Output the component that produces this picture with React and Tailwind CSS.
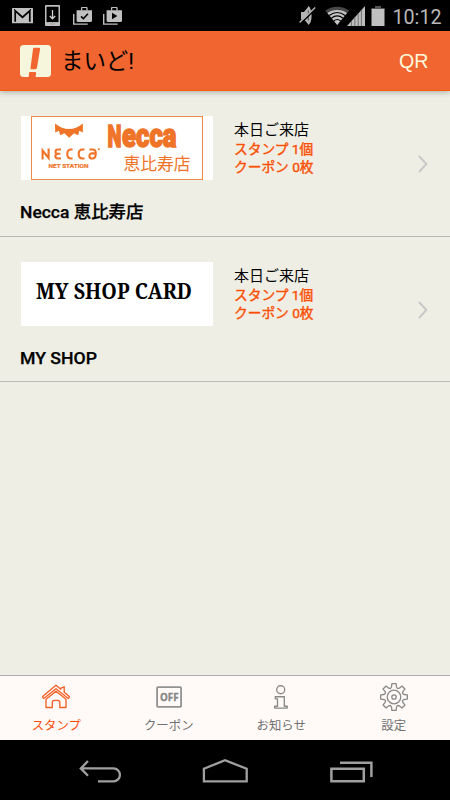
import React from "react";

const jp = "font-['Roboto','Noto_Sans_CJK_JP',sans-serif]";

function GmailIcon() {
  return (
    <svg width="21" height="16" viewBox="0 0 21 16" className="ml-3 block">
      <rect width="21" height="15.3" rx="0.6" fill="#c0c0c0" />
      <path d="M3.2 13.8V2.8L10.5 9.4L17.8 2.8V13.8" fill="none" stroke="#000" strokeWidth="1.7" />
      <path d="M2 1.2L10.5 8.8L19 1.2" fill="none" stroke="#000" strokeWidth="0.9" />
    </svg>
  );
}

function DeviceDownloadIcon() {
  return (
    <svg width="15" height="21" viewBox="0 0 15 21" className="ml-3 block">
      <rect width="15" height="21" rx="0.8" fill="#c0c0c0" />
      <rect x="1.5" y="1.7" width="12" height="15.4" fill="#000" />
      <path d="M7.5 5V13M4.8 11L7.5 13.8L10.2 11" fill="none" stroke="#d0d0d0" strokeWidth="1.3" />
      <path d="M5.3 19h4.4" stroke="#888" strokeWidth="0.6" />
    </svg>
  );
}

function BagIcon({ children, className }) {
  return (
    <svg width="19" height="18" viewBox="0 0 19 18" className={className}>
      <path d="M0.7 7V17.1H14.7" fill="none" stroke="#c0c0c0" strokeWidth="1.4" />
      <path d="M8.6 3.4V1.2a0.8 0.8 0 0 1 .8-.8h3.8a0.8 0.8 0 0 1 .8.8V3.4" fill="none" stroke="#c0c0c0" strokeWidth="1.3" />
      <path d="M3.6 3.2H19V13.4a1.6 1.6 0 0 1-1.6 1.6H5.2a1.6 1.6 0 0 1-1.6-1.6Z" fill="#c0c0c0" />
      {children}
    </svg>
  );
}

function StatusBar() {
  return (
    <div className="flex h-[31px] items-center bg-black">
      <GmailIcon />
      <DeviceDownloadIcon />
      <BagIcon className="ml-[13px] block">
        <path d="M8 9.4L10.4 11.6L15 6.7" fill="none" stroke="#000" strokeWidth="1.5" />
      </BagIcon>
      <BagIcon className="ml-[11px] block">
        <path d="M9 5.8V12.2L14.3 9Z" fill="#000" />
      </BagIcon>
      <div className="flex-1" />
      <svg width="17" height="21" viewBox="0 0 17 21" className="block">
        <path d="M2 7H5L9.5 1.4V19.6L5 14.5H2Z" fill="#b4b4b4" />
        <path d="M9 1Q12.6 3 12.6 10.5T9 20Z" fill="#b4b4b4" />
        <path d="M9.3 5.5V15.5" stroke="#444" strokeWidth="1" />
        <path d="M1.6 18.8L16.6 3.8" stroke="#000" strokeWidth="1.6" />
        <path d="M0.6 17.6L16.2 2.4" stroke="#b4b4b4" strokeWidth="1.4" />
      </svg>
      <svg width="25" height="20" viewBox="0 0 25 20" className="ml-[9px] block">
        <path d="M12.2 19L0.3 4.6Q5.5 0.8 12.2 0.8T24.1 4.6Z" fill="#484848" />
        <path d="M12.2 19L2.4 7Q6.5 4 12.2 4T22 7Z" fill="#c4c4c4" />
        <path d="M4.2 9.4Q12.2 3.6 20.2 9.4M6.4 12.2Q12.2 7.7 18 12.2M8.7 15Q12.2 12 15.7 15" fill="none" stroke="#000" strokeWidth="1.2" />
      </svg>
      <svg width="18" height="20" viewBox="0 0 18 20" className="-ml-[3px] block">
        <path d="M0 20L18 0V20Z" fill="#bdbdbd" />
        <path d="M4.4 15V20M7.8 11V20M11.2 7.5V20M14.4 4V20" stroke="#686868" strokeWidth="0.9" />
      </svg>
      <svg width="14" height="20" viewBox="0 0 14 20" className="ml-[6px] block">
        <path d="M4 0h6v2h3.5v2H0.5V2H4Z" fill="#555" />
        <rect x="0.5" y="3" width="13" height="17" fill="#c0c0c0" />
      </svg>
      <svg width="51" height="30" viewBox="0 0 51 30" className="ml-[7px] mr-[7px] block">
        <text x="0.5" y="23" textLength="49" lengthAdjust="spacingAndGlyphs" fontSize="20.5" fill="#b8b8b8" className="font-['Roboto']">10:12</text>
      </svg>
    </div>
  );
}

function Header() {
  return (
    <header className="relative z-10 flex h-[60px] items-center border-b border-[#f65b0e] bg-[#f16530] pl-5 pr-[21px] shadow-[0_1px_6px_rgba(0,0,0,0.3)]">
      <svg width="31" height="32" viewBox="0 0 31 32" className="block">
        <rect width="31" height="32" rx="3.5" fill="#f6f6dd" />
        <path d="M14.2 2.7H19a1.2 1.2 0 0 1 1.1 1.4L17 22.7a2 2 0 0 1-1.8 1.5H11.5a1 1 0 0 1-1-1.2L13 3.9a1.4 1.4 0 0 1 1.2-1.2Z" fill="#f16530" />
        <path d="M9.8 27h5.3a1 1 0 0 1 1 1.1L15.6 32H8.7l.3-4.2a.9.9 0 0 1 .8-.8Z" fill="#f16530" />
      </svg>
      <svg width="80" height="34" viewBox="0 0 80 34" className="ml-[10px] block">
        <text x="0" y="25" fontSize="22.6" textLength="73" lengthAdjust="spacingAndGlyphs" className={jp}>まいど!</text>
      </svg>
      <svg width="30" height="30" viewBox="0 0 30 30" className="ml-auto block">
        <text x="0" y="22" fontSize="20" textLength="29.5" lengthAdjust="spacingAndGlyphs" fill="#fff8dc" className="font-['Liberation_Sans',sans-serif]">QR</text>
      </svg>
    </header>
  );
}

function NeccaCard() {
  return (
    <svg width="192" height="64" viewBox="0 0 192 64" className="block">
      <rect width="192" height="64" fill="#fff" />
      <rect x="10.5" y="0.5" width="171" height="63" fill="#fff" stroke="#ef8a4a" />
      <path d="M34 7.5Q48 18.5 62 7.5L61.8 16.5L58.2 14.8L57.2 19.2L53 17.2L48.2 21.8L43.4 17.2L39.2 19.2L38 14.8L34.2 16.5Z" fill="#ef7428" />
      <g fill="none" stroke="#ef7428" strokeWidth="2.1">
        <path d="M21.6 43.5V34.5L27.6 42V32.5" />
        <path d="M40 33.5H37Q34.5 33.5 34.5 35.7T37 37.8H39.4M37 37.8Q34.3 38.2 34.3 40.2T37 42.5H40" />
        <path d="M51.6 33.5H50Q46.3 33.5 46.3 38T50 42.5H51.6M63.5 33.5H61.5Q57.7 33.5 57.7 38T61.5 42.5H63.5" />
        <path d="M68.5 33.5H71.5Q74.8 33.5 74.8 37.2Q74.8 42.5 71.4 42.5Q68.4 42.5 68.4 39.9T71.4 37.4H74.5" />
      </g>
      <circle cx="77.8" cy="33.2" r="1" fill="#ef7428" />
      <text x="27.5" y="51.5" fontSize="6.2" fontWeight="700" textLength="40" lengthAdjust="spacingAndGlyphs" fill="#ef7428" stroke="#ef7428" strokeWidth="0.2" className="font-['Roboto']">NET STATION</text>
      <g fill="#ef7428" stroke="#ef7428" strokeWidth="1.5" fontWeight="900" className="font-['Roboto']">
        <text y="31.2">
          <tspan x="86.5" fontSize="31.5" textLength="14" lengthAdjust="spacingAndGlyphs">N</tspan>
          <tspan x="101" fontSize="33" textLength="54.5" lengthAdjust="spacingAndGlyphs">ecca</tspan>
        </text>
      </g>
      <text x="102.5" y="53.5" fontSize="17.2" textLength="67" lengthAdjust="spacingAndGlyphs" fill="#ef7428" className="font-['Noto_Sans_CJK_JP',sans-serif]">恵比寿店</text>
    </svg>
  );
}

function MyShopCard() {
  return (
    <svg width="192" height="64" viewBox="0 0 192 64" className="block">
      <rect width="192" height="64" fill="#fff" />
      <text x="15" y="37" fontSize="22" fontWeight="700" textLength="156" lengthAdjust="spacingAndGlyphs" className="font-['Noto_Serif','DejaVu_Serif_Condensed','Liberation_Serif',serif]">MY SHOP CARD</text>
    </svg>
  );
}

function ShopRow({ card, name, nameWidth, className }) {
  return (
    <div className={`flex flex-col border-b border-[#b9b9b4] pl-[21px] pr-[22px] pt-[25px] ${className}`}>
      <div className="flex">
        {card}
        <div className={`ml-[21px] flex flex-col pt-1 ${jp}`}>
          <span className="h-5 whitespace-nowrap text-[15px] leading-[20px] text-black">本日ご来店</span>
          <span className="h-[18px] whitespace-nowrap text-[13.7px] leading-[18px] text-[#fa5005] [-webkit-text-stroke:0.4px]">スタンプ 1個</span>
          <span className="h-[18px] whitespace-nowrap text-[13.7px] leading-[18px] text-[#fa5005] [-webkit-text-stroke:0.4px]">クーポン 0枚</span>
        </div>
        <svg width="10" height="18" viewBox="0 0 10 18" className="ml-auto mt-[39px] block">
          <path d="M1 1L8.4 9L1 17" fill="none" stroke="#c8c8c8" strokeWidth="1.9" />
        </svg>
      </div>
      <svg width="180" height="26" viewBox="0 0 180 26" className="-ml-px mt-[19px] block">
        <text x="0" y="19" fontSize="17.3" fontWeight="500" textLength={nameWidth} lengthAdjust="spacingAndGlyphs" stroke="#000" strokeWidth="0.25" className={jp}>{name}</text>
      </svg>
    </div>
  );
}

function HomeIcon() {
  return (
    <svg width="28" height="28" viewBox="0 0 28 28" className="block" fill="none" stroke="#f46127" strokeWidth="1.35" strokeLinejoin="round">
      <path d="M1.2 13.1L14 2.3L18.8 6.3V5.2L22.2 3.8V9.2L26.8 13.1A1 1 0 0 1 25.6 15L14 5.8L2.4 15A1 1 0 0 1 1.2 13.1Z" />
      <path d="M4 16.2V24.5H10.3V19.5Q10.3 17.3 12.5 17.3H15.7Q17.8 17.3 17.8 19.5V24.5H24V16.2L14 8.3Z" />
    </svg>
  );
}

function OffIcon() {
  return (
    <svg width="28" height="28" viewBox="0 0 28 28" className="block">
      <rect x="2.1" y="4.1" width="24" height="19.8" rx="0.8" fill="none" stroke="#929292" strokeWidth="1.8" />
      <text x="5" y="18" fontSize="11.3" fontWeight="700" textLength="18.5" lengthAdjust="spacingAndGlyphs" fill="#858585" stroke="#858585" strokeWidth="0.35" className="font-['Open_Sans',sans-serif]">OFF</text>
    </svg>
  );
}

function InfoIcon() {
  return (
    <svg width="28" height="28" viewBox="0 0 28 28" className="block" fill="none" stroke="#898989" strokeWidth="1.35" strokeLinejoin="round">
      <circle cx="13.7" cy="6.7" r="4" />
      <path d="M8.3 13.7H17.3V23.2H20.2V25.1H7.7V23.2H10.5V15.8H8.3Z" />
    </svg>
  );
}

const gearPoints = Array.from({ length: 8 }, (_, tooth) =>
  [[-14, 10.3], [-9, 13.5], [9, 13.5], [14, 10.3], [22.5, 9.2]].map(([offset, radius]) => {
    const angle = ((tooth * 45 + offset - 90) * Math.PI) / 180;
    return `${14 + radius * Math.cos(angle)},${14 + radius * Math.sin(angle)}`;
  }).join(" ")
).join(" ");

function GearIcon() {
  return (
    <svg width="28" height="28" viewBox="0 0 28 28" className="block overflow-visible" fill="none" stroke="#898989" strokeWidth="1.3" strokeLinejoin="round">
      <polygon points={gearPoints} />
      <circle cx="14" cy="14" r="6.8" />
      <circle cx="14" cy="14" r="2.2" />
    </svg>
  );
}

function Tab({ icon, label, active }) {
  return (
    <div className="flex flex-col items-center pt-[7px]">
      {icon}
      <span className={`mt-[6px] whitespace-nowrap text-[12.4px] leading-[18px] ${jp} ${active ? "text-[#fb4e08]" : "text-[#707070]"}`}>{label}</span>
    </div>
  );
}

export default function App() {
  return (
    <div className="flex h-[800px] w-[450px] flex-col overflow-hidden bg-[#eeeee5]">
      <StatusBar />
      <Header />
      <main className="flex flex-1 flex-col">
        <ShopRow className="h-[146px]" card={<NeccaCard />} name="Necca 恵比寿店" nameWidth={123.5} />
        <ShopRow className="h-[145px]" card={<MyShopCard />} name="MY SHOP" nameWidth={77} />
      </main>
      <nav className="grid h-[65px] grid-cols-4 border-t border-[#adadad] bg-[#fffaf8]">
        <Tab icon={<HomeIcon />} label="スタンプ" active />
        <Tab icon={<OffIcon />} label="クーポン" />
        <Tab icon={<InfoIcon />} label="お知らせ" />
        <Tab icon={<GearIcon />} label="設定" />
      </nav>
      <div className="flex h-[60px] items-start bg-black pl-[79px] pt-[18px]">
        <svg width="43" height="26" viewBox="0 0 43 26" fill="none" stroke="#a0a0a0" strokeWidth="2.3" className="block">
          <path d="M9 3L1.8 10.4L9 17.8M2 10.4H34.5a6.4 6.4 0 0 1 0 12.9H19" />
        </svg>
        <svg width="47" height="26" viewBox="0 0 47 26" fill="none" stroke="#a0a0a0" strokeWidth="2.3" className="ml-[80px] block">
          <path d="M1.9 23.4V10.7L23 2.3L44.7 10.7V23.4Z" />
        </svg>
        <svg width="44" height="26" viewBox="0 0 44 26" fill="none" stroke="#a0a0a0" strokeWidth="2.5" className="ml-[80px] block">
          <path d="M2.4 10.7H34.8V23.3H2.4ZM11 4.8H42.4V19" />
        </svg>
      </div>
    </div>
  );
}
